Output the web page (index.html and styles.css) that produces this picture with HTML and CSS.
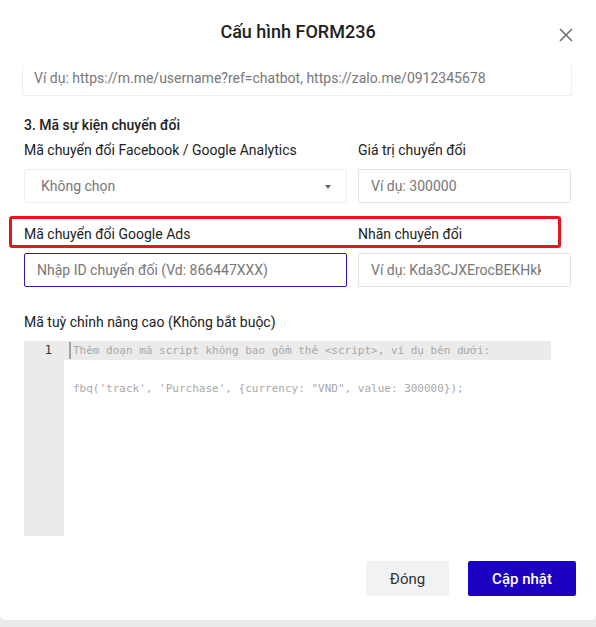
FILE: index.html
```html
<!DOCTYPE html>
<html lang="vi">
<head>
<meta charset="utf-8">
<title>Cấu hình FORM236</title>
<link rel="stylesheet" href="styles.css">
</head>
<body>
<div class="modal">
  <header class="modal-header">
    <h2 class="modal-title">Cấu hình FORM236</h2>
    <button class="close-btn" aria-label="Đóng">
      <svg width="14" height="14" viewBox="0 0 14 14"><path d="M1 1L13 13M13 1L1 13" stroke="#6f6f6f" stroke-width="1.6" fill="none"/></svg>
    </button>
  </header>
  <div class="modal-body">
    <div class="field url-field">Ví dụ: https://m.me/username?ref=chatbot, https://zalo.me/0912345678</div>
    <div class="section-title">3. Mã sự kiện chuyển đổi</div>
    <div class="grid">
      <div class="label">Mã chuyển đổi Facebook / Google Analytics</div>
      <div class="label">Giá trị chuyển đổi</div>
      <div class="field select">Không chọn<span class="caret"></span></div>
      <div class="field">Ví dụ: 300000</div>
    </div>
    <div class="grid grid-ads">
      <div class="highlight"></div>
      <div class="label">Mã chuyển đổi Google Ads</div>
      <div class="label">Nhãn chuyển đổi</div>
      <div class="field focused">Nhập ID chuyển đối (Vd: 866447XXX)</div>
      <div class="field clip"><span class="clip-text">Ví dụ: Kda3CJXErocBEKHkkWBA</span></div>
    </div>
    <div class="label label-code">Mã tuỳ chỉnh nâng cao (Không bắt buộc)</div>
    <div class="editor">
      <div class="gutter">
        <div class="ln">1</div>
      </div>
      <div class="lines">
        <div class="line active"><span class="cursor"></span>Thêm đoạn mã script không bao gồm thẻ &lt;script&gt;, ví dụ bên dưới:</div>
        <div class="line"></div>
        <div class="line">fbq('track', 'Purchase', {currency: "VND", value: 300000});</div>
      </div>
    </div>
  </div>
  <footer class="modal-footer">
    <button class="btn btn-light">Đóng</button>
    <button class="btn btn-primary">Cập nhật</button>
  </footer>
</div>
</body>
</html>
```
FILE: styles.css
```css
* { box-sizing: border-box; }
html, body { margin: 0; padding: 0; }
body {
  background: #ebebeb;
  font-family: Roboto, "Liberation Sans", Arial, sans-serif;
  color: #222;
  height: 627px;
  overflow: hidden;
}
.modal {
  width: 596px;
  height: 620px;
  background: #fff;
  border-radius: 0 0 5px 5px;
  display: flex;
  flex-direction: column;
}
.modal-header {
  height: 66px;
  flex: none;
  display: flex;
  align-items: center;
  justify-content: center;
  position: relative;
}
.modal-title {
  margin: 0;
  font-size: 18px;
  font-weight: 500;
  color: #1e1e1e;
  line-height: 22px;
  margin-top: -2px;
}
.close-btn {
  position: absolute;
  right: 23px;
  top: 28px;
  width: 14px;
  height: 14px;
  padding: 0;
  border: 0;
  background: none;
  display: flex;
}
.modal-body {
  flex: 1;
  overflow: hidden;
  padding: 0 24px;
}
.field {
  height: 34px;
  border: 1px solid #e3e3e3;
  border-radius: 2px;
  display: flex;
  align-items: center;
  padding: 0 12px;
  font-size: 14px;
  color: #777;
  white-space: nowrap;
  overflow: hidden;
}
.url-field {
  margin-top: -5px;
  margin-left: -2px;
  height: 35px;
  padding-left: 11px;
  border-color: #eeeeee;
  padding-bottom: 2px;
}
.section-title {
  margin-top: 19px;
  font-size: 14px;
  font-weight: 500;
  line-height: 20px;
  color: #222;
}
.grid {
  display: grid;
  grid-template-columns: 323px 213px;
  column-gap: 11px;
  row-gap: 9px;
  position: relative;
}
.section-title + .grid { margin-top: 5px; }
.grid-ads { margin-top: 21px; }
.label {
  font-size: 14px;
  line-height: 20px;
  color: #222;
}
.select {
  position: relative;
  padding-left: 16px;
  border-color: #eeeeee;
}
.caret {
  position: absolute;
  right: 15px;
  top: 15px;
  width: 0;
  height: 0;
  border-left: 3.5px solid transparent;
  border-right: 3.5px solid transparent;
  border-top: 4px solid #6a6a6a;
}
.focused {
  border-color: #2a17c4;
}
.clip {
  padding-right: 0;
}
.clip-text {
  display: block;
  width: 170px;
  overflow: hidden;
  white-space: nowrap;
}
.highlight {
  position: absolute;
  left: -15px;
  top: -8px;
  width: 552px;
  height: 32px;
  border: 3px solid #e8141b;
  border-radius: 3px;
  pointer-events: none;
}
.label-code {
  margin-top: 25px;
}
.editor {
  margin-top: 9px;
  width: 527px;
  height: 195px;
  display: flex;
  background: #fff;
  font-family: "DejaVu Sans Mono", "Liberation Mono", monospace;
  font-size: 11px;
  color: #a9a9a9;
}
.gutter {
  width: 40px;
  flex: none;
  background: #ebebeb;
}
.ln {
  height: 19px;
  line-height: 19px;
  text-align: right;
  padding-right: 12px;
  color: #333;
  font-size: 12px;
}
.lines {
  flex: 1;
}
.line {
  height: 19px;
  line-height: 19px;
  padding-left: 9px;
  white-space: pre;
  position: relative;
}
.line.active {
  background: #ebebeb;
}
.cursor {
  position: absolute;
  left: 5px;
  top: 1px;
  width: 2px;
  height: 17px;
  background: #a0a0a0;
}
.modal-footer {
  flex: none;
  display: flex;
  justify-content: flex-end;
  gap: 19px;
  padding: 25px 20px 24px 0;
}
.btn {
  height: 35px;
  border: 0;
  border-radius: 2px;
  font-family: Roboto, "Liberation Sans", Arial, sans-serif;
  font-size: 15px;
  padding: 0;
  cursor: pointer;
}
.btn-light {
  width: 83px;
  background: #f1f2f4;
  color: #333;
}
.btn-primary {
  width: 108px;
  background: #1c00c2;
  color: #fff;
  font-weight: 500;
}
```
